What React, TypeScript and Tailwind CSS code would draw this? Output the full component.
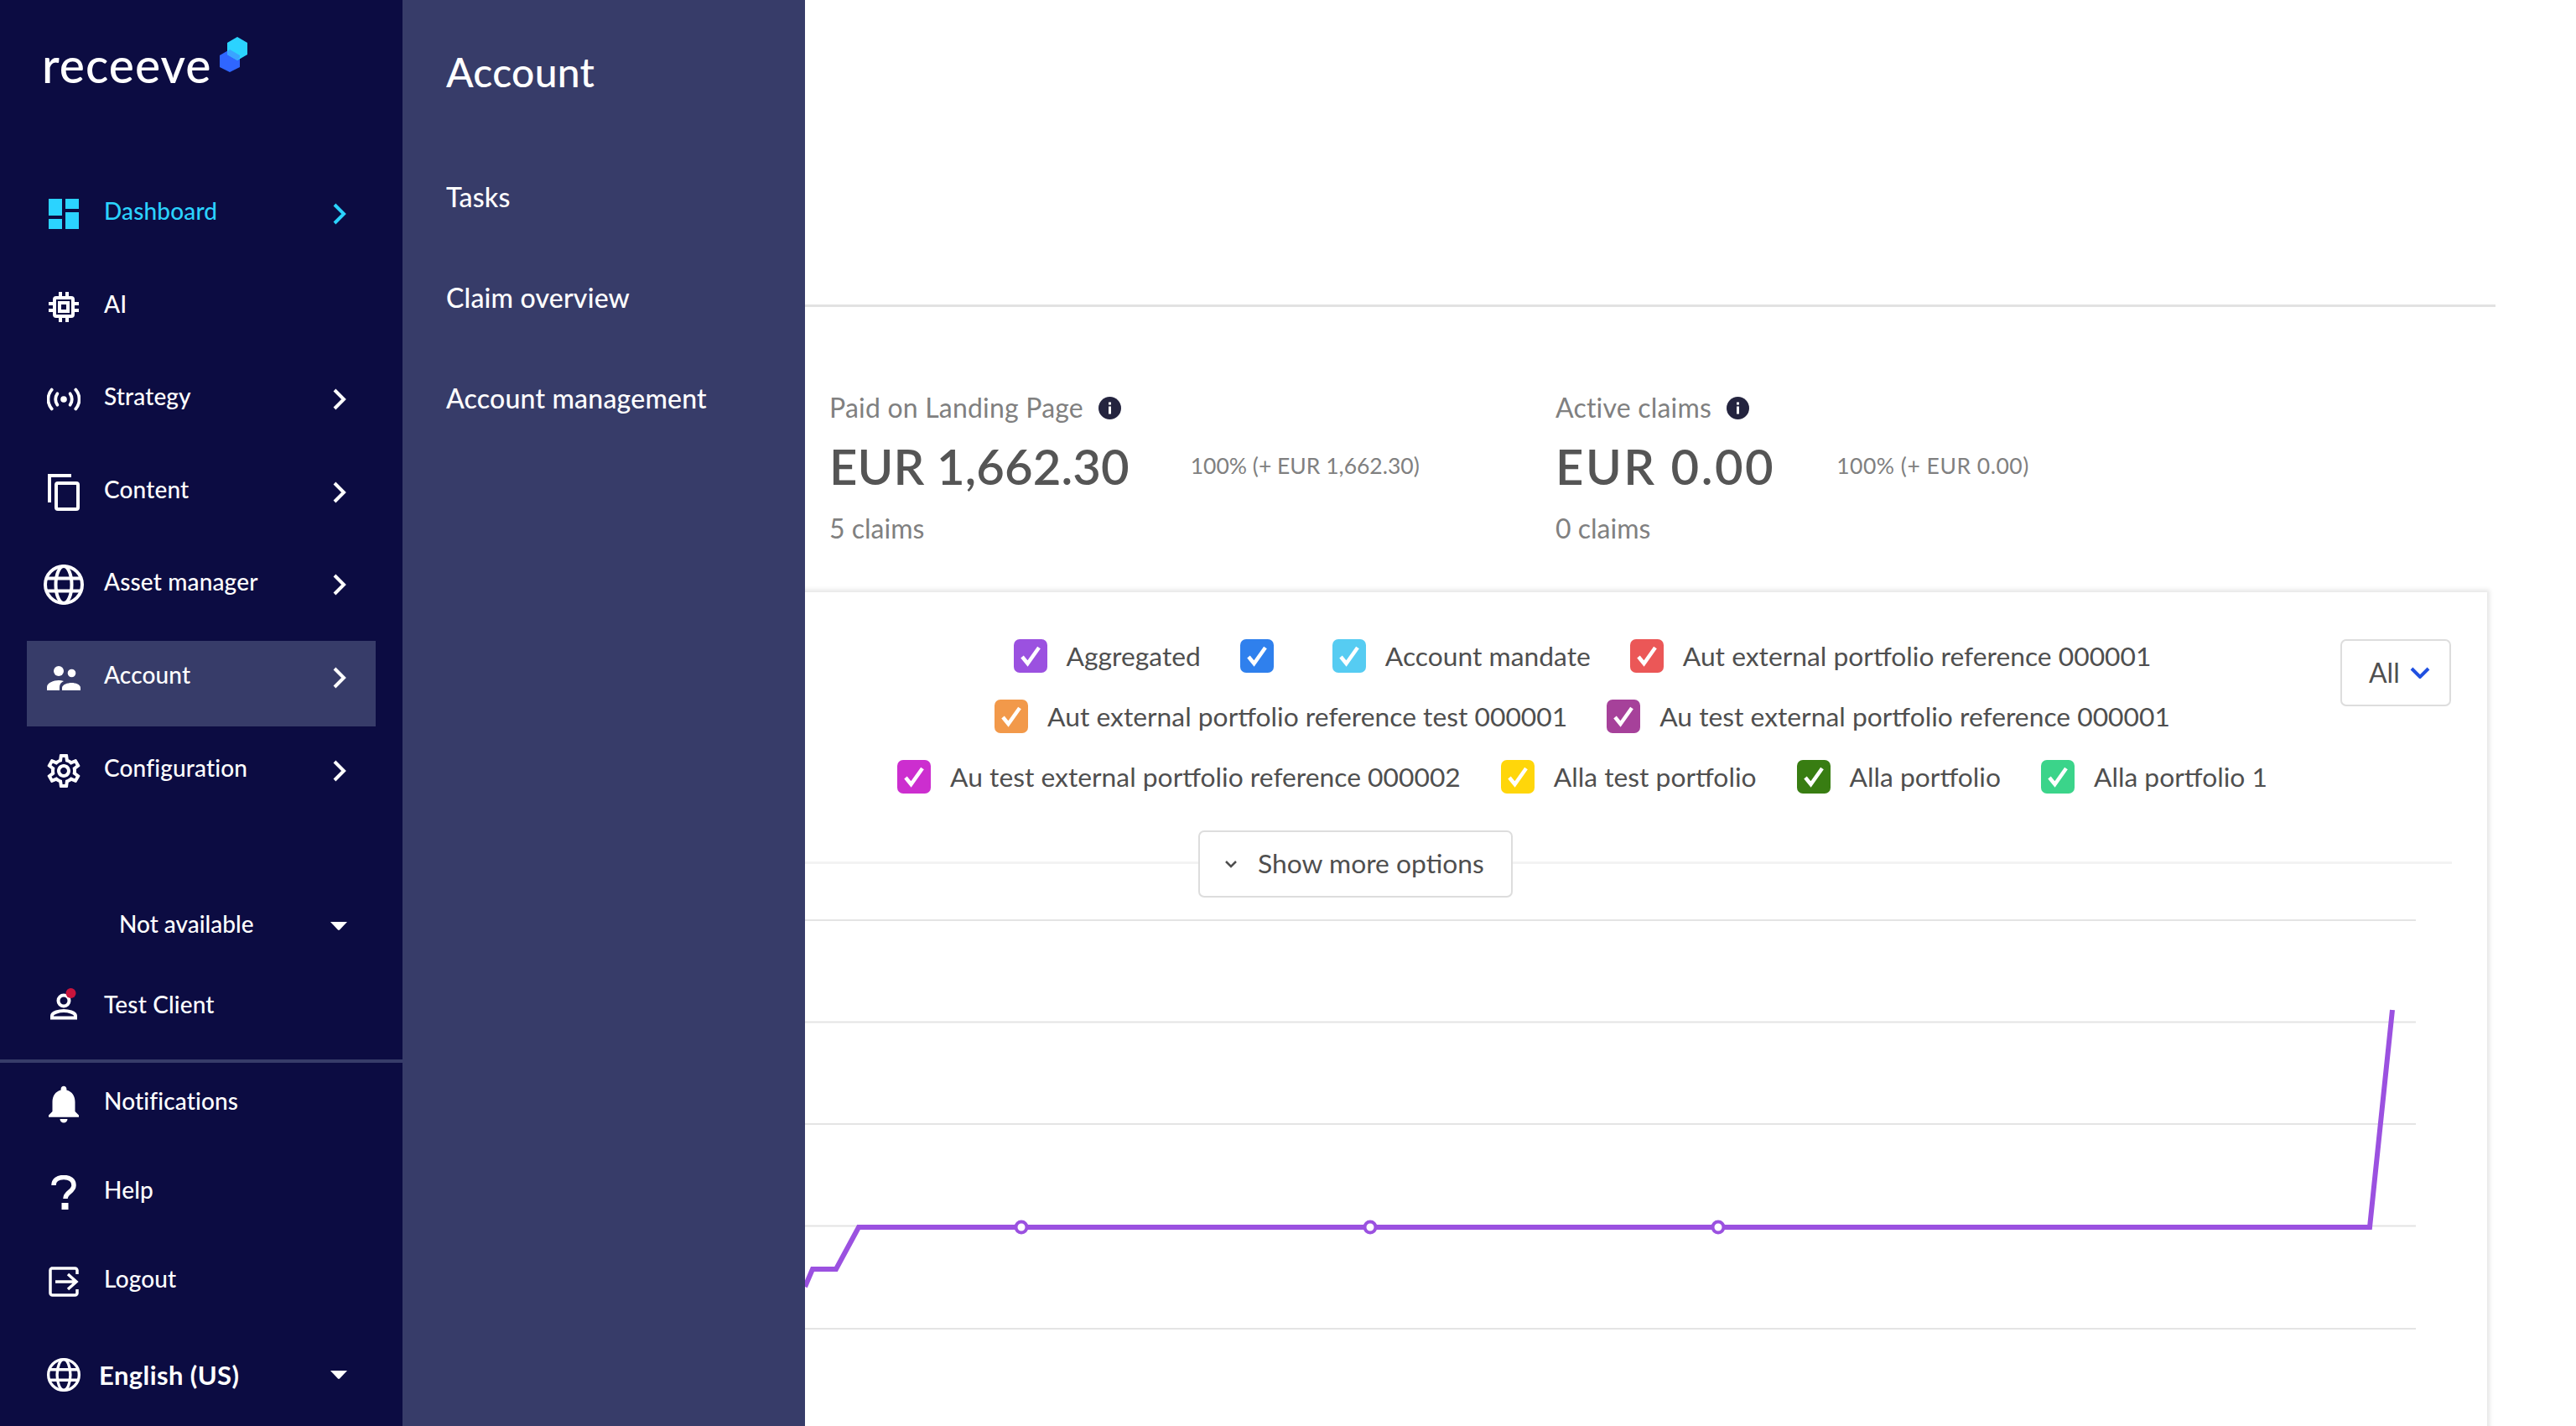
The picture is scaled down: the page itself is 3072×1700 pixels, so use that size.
import type { ReactNode } from "react"
import { MdNotifications, MdOutlineSettings } from "react-icons/md"

const ACTIVE = "#2bd3ff"

function Chevron({ color = "white" }: { color?: string }) {
  return (
    <svg width="16" height="26" viewBox="0 0 16 26" fill="none">
      <path d="M2 2l11 11L2 24" stroke={color} strokeWidth="4" />
    </svg>
  )
}

function Caret() {
  return (
    <svg width="20" height="10" viewBox="0 0 20 10">
      <path d="M0 0h20L11 9.5a1.5 1.5 0 0 1-2 0z" fill="white" />
    </svg>
  )
}

function DashboardIcon() {
  return (
    <svg width="36" height="36" viewBox="0 0 36 36" fill={ACTIVE}>
      <rect x="0" y="0" width="16" height="20" />
      <rect x="20" y="0" width="16" height="12" />
      <rect x="0" y="24" width="16" height="12" />
      <rect x="20" y="16" width="16" height="20" />
    </svg>
  )
}

function ChipIcon() {
  return (
    <svg width="36" height="36" viewBox="0 0 36 36" fill="white">
      <path d="M12 0h4v5h4V0h4v5h3a4 4 0 0 1 4 4v3h5v4h-5v4h5v4h-5v3a4 4 0 0 1-4 4h-3v5h-4v-5h-4v5h-4v-5H9a4 4 0 0 1-4-4v-3H0v-4h5v-4H0v-4h5V9a4 4 0 0 1 4-4h3zM9 9v18h18V9z" fillRule="evenodd" />
      <path d="M11 11h14v14H11zM15 15v6h6v-6z" fillRule="evenodd" />
    </svg>
  )
}

function AntennaIcon() {
  return (
    <svg width="40" height="28" viewBox="0 0 42 28" fill="none" stroke="white" strokeWidth="4" strokeLinecap="round">
      <circle cx="21" cy="14" r="4" fill="white" stroke="none" />
      <path d="M13 7c-3 4-3 10 0 14M29 7c3 4 3 10 0 14" />
      <path d="M6 2c-6 7-6 17 0 24M36 2c6 7 6 17 0 24" />
    </svg>
  )
}

function CopyIcon() {
  return (
    <svg width="38" height="44" viewBox="0 0 38 44" fill="none">
      <path d="M28 2H2v32" stroke="white" strokeWidth="4" />
      <rect x="10" y="11" width="26" height="31" rx="2" stroke="white" strokeWidth="4" />
    </svg>
  )
}

function GlobeIcon({ size = 48 }: { size?: number }) {
  return (
    <svg width={size} height={size} viewBox="0 0 48 48" fill="none" stroke="white" strokeWidth="4">
      <circle cx="24" cy="24" r="22" />
      <ellipse cx="24" cy="24" rx="9.500" ry="22" />
      <path d="M3 16.500h42M3 31.500h42" />
    </svg>
  )
}

function PeopleIcon() {
  return (
    <svg width="40" height="30" viewBox="0 0 40 30" fill="white">
      <circle cx="14" cy="7" r="6" />
      <circle cx="29.500" cy="9.500" r="4.800" />
      <path d="M0 30v-4c0-5 8-8 14-8 2 0 4 .3 6 1-3 1.500-5 3.500-5 7v4z" />
      <path d="M18 30v-3c0-4 7-6 11.500-6S40 23 40 27v3z" />
    </svg>
  )
}

function ClientIcon() {
  return (
    <svg width="36" height="38" viewBox="0 0 36 38" fill="none">
      <circle cx="18" cy="15" r="6.500" stroke="white" strokeWidth="4" />
      <path d="M4 35.500v-2.500c0-4 9-6 14-6s14 2 14 6v2.500z" stroke="white" strokeWidth="4" />
      <circle cx="26.500" cy="6" r="6" fill="#c8143c" />
    </svg>
  )
}

function HelpIcon() {
  return (
    <svg width="30" height="42" viewBox="0 0 30 42" fill="none">
      <path d="M3 12C3 6 8 2.500 15 2.500S27 6 27 12c0 8-10 8-10 16" stroke="white" strokeWidth="5.500" />
      <rect x="12.500" y="33" width="8" height="8" fill="white" />
    </svg>
  )
}

function LogoutIcon() {
  return (
    <svg width="36" height="36" viewBox="0 0 36 36" fill="none" stroke="white" strokeWidth="3.500">
      <path d="M34 9V4.500A2.500 2.500 0 0 0 31.500 2h-28A2.500 2.500 0 0 0 2 4.500v27A2.500 2.500 0 0 0 4.500 34h27a2.500 2.500 0 0 0 2.500-2.500V27" />
      <path d="M8 18h25M23 9l10 9-10 9" />
    </svg>
  )
}

function NavItem({ icon, label, active, highlight, arrow = true }: { icon: ReactNode; label: string; active?: boolean; highlight?: boolean; arrow?: boolean }) {
  return (
    <div className={`flex h-[102px] w-[416px] items-start pl-[16px] pr-[35px] ${highlight ? "bg-[#373c69]" : ""}`}>
      <div className="mt-[16px] flex h-[56px] w-[56px] items-center justify-center">{icon}</div>
      <div className={`ml-[20px] mt-[24px] flex-1 text-[28px] font-medium leading-[32px] tracking-[0.15px] ${active ? "text-[#2bd3ff]" : "text-white"}`}>{label}</div>
      {arrow && (
        <div className="mt-[31px]">
          <Chevron color={active ? ACTIVE : "white"} />
        </div>
      )}
    </div>
  )
}

function FooterItem({ icon, label }: { icon: ReactNode; label: string }) {
  return (
    <div className="flex h-[56px] items-center pl-[48px]">
      <div className="flex w-[56px] justify-center">{icon}</div>
      <div className="ml-[20px] pb-[8px] text-[28px] font-medium leading-[32px] tracking-[0.15px] text-white">{label}</div>
    </div>
  )
}

function Sidebar() {
  return (
    <aside className="flex h-[1700px] w-[480px] shrink-0 flex-col bg-[#0c0c42]">
      <div className="flex h-[211px] items-start pl-[50px] pt-[43px]">
        <span className="text-[57px] font-medium leading-[68px] tracking-[1px] text-white">receeve</span>
        <svg className="ml-[10px] mt-[1px]" width="34" height="42" viewBox="0 0 34 42">
          <path d="M0 22l12-7 12 7v14l-12 6-12-6z" fill="#2f66ff" />
          <path d="M9 7l12-7 12 7v14l-12 7-12-7z" fill="#2bd3ff" />
          <path d="M9 17.300l3-2.300 12 7v2.500l-3 3.500-12-7z" fill="#3aa4ff" />
        </svg>
      </div>
      <div className="flex h-[860px] flex-col gap-[8.6px] pl-[32px]">
        <NavItem icon={<DashboardIcon />} label="Dashboard" active />
        <NavItem icon={<ChipIcon />} label="AI" arrow={false} />
        <NavItem icon={<AntennaIcon />} label="Strategy" />
        <NavItem icon={<CopyIcon />} label="Content" />
        <NavItem icon={<GlobeIcon />} label="Asset manager" />
        <NavItem icon={<PeopleIcon />} label="Account" highlight />
        <NavItem icon={<MdOutlineSettings size={48} color="white" />} label="Configuration" />
      </div>
      <div className="flex h-[60px] items-center pl-[142px] pr-[66px] text-[28px] font-medium text-white">
        <span className="flex-1">Not available</span>
        <span className="pt-[6px]">
          <Caret />
        </span>
      </div>
      <div className="flex h-[132px] items-center pl-[48px]">
        <div className="flex w-[56px] justify-center">
          <ClientIcon />
        </div>
        <div className="ml-[20px] text-[28px] font-medium tracking-[0.15px] text-white">Test Client</div>
      </div>
      <div className="h-[4px] bg-[#373c69]" />
      <div className="flex flex-col gap-[50px] pt-[21px]">
        <FooterItem icon={<MdNotifications size={54} color="white" />} label="Notifications" />
        <FooterItem icon={<HelpIcon />} label="Help" />
        <FooterItem icon={<LogoutIcon />} label="Logout" />
      </div>
      <div className="mt-[55px] flex h-[56px] items-center pl-[48px] pr-[66px]">
        <div className="flex w-[56px] justify-center">
          <GlobeIcon size={40} />
        </div>
        <div className="ml-[14px] flex-1 text-[31px] font-bold tracking-[0.4px] text-white">English (US)</div>
        <Caret />
      </div>
    </aside>
  )
}

function AccountPanel() {
  return (
    <div className="h-[1700px] w-[480px] shrink-0 bg-[#373c69] pl-[52px] font-medium text-white">
      <div className="pt-[56px] text-[48px] leading-[60px] tracking-[0.3px]">Account</div>
      <div className="mt-[101px] flex flex-col gap-[84px] text-[32px] leading-[36px] tracking-[0.2px]">
        <div>Tasks</div>
        <div>Claim overview</div>
        <div>Account management</div>
      </div>
    </div>
  )
}

function InfoDot() {
  return (
    <svg width="27" height="27" viewBox="0 0 27 27">
      <circle cx="13.500" cy="13.500" r="13.500" fill="#24243f" />
      <rect x="12" y="11.500" width="3" height="9" fill="white" />
      <rect x="12" y="6.500" width="3" height="3" fill="white" />
    </svg>
  )
}

function Stat({ title, value, delta, claims, wide }: { title: string; value: string; delta: string; claims: string; wide?: boolean }) {
  return (
    <div className="w-[866px] shrink-0">
      <div className="mt-[100px] flex h-[40px] items-center gap-[18px] text-[32px] tracking-[0.2px] text-[#808080]">
        {title}
        <InfoDot />
      </div>
      <div className="mt-[14px] flex h-[70px] items-center">
        <span className={`text-[58px] font-semibold text-[#555555] ${wide ? "tracking-[2.5px]" : "tracking-[0.1px]"}`}>{value}</span>
        <span className={`ml-[73px] pt-[2px] text-[26.500px] text-[#808080] ${wide ? "tracking-[0.5px]" : ""}`}>{delta}</span>
      </div>
      <div className="mt-[20px] h-[40px] text-[32px] leading-[40px] text-[#808080]">{claims}</div>
    </div>
  )
}

function LegendItem({ color, label }: { color: string; label?: string }) {
  return (
    <div className="flex items-center gap-[23px]">
      <span className="flex h-[40px] w-[40px] items-center justify-center rounded-[7px]" style={{ backgroundColor: color }}>
        <svg width="26" height="26" viewBox="0 0 26 26" fill="none">
          <path d="M3 14l6.500 8L23 3" stroke="white" strokeWidth="4.500" />
        </svg>
      </span>
      <span className="text-[31.800px] leading-[40px] text-[#4f4f4f]">{label}</span>
    </div>
  )
}

function Legend() {
  return (
    <div className="flex flex-col gap-[32px] pr-[132px]">
      <div className="flex justify-center gap-[47px]">
        <LegendItem color="#9b51e0" label="Aggregated" />
        <LegendItem color="#2f80ed" />
        <LegendItem color="#56ccf2" label="Account mandate" />
        <LegendItem color="#eb5757" label="Aut external portfolio reference 000001" />
      </div>
      <div className="flex justify-center gap-[47px]">
        <LegendItem color="#f2994a" label="Aut external portfolio reference test 000001" />
        <LegendItem color="#a6419a" label="Au test external portfolio reference 000001" />
      </div>
      <div className="flex justify-center gap-[48px]">
        <LegendItem color="#cc2ecf" label="Au test external portfolio reference 000002" />
        <LegendItem color="#ffd60a" label="Alla test portfolio" />
        <LegendItem color="#387d12" label="Alla portfolio" />
        <LegendItem color="#3bd48a" label="Alla portfolio 1" />
      </div>
    </div>
  )
}

function Chart() {
  const gridY = [1, 122.500, 244, 365.500, 488]
  const dots = [258, 674, 1089]
  return (
    <svg className="ml-[20px] block" width="1921" height="530" viewBox="0 0 1921 530" fill="none">
      {gridY.map((y) => (
        <line key={y} x1="0" x2="1921" y1={y} y2={y} stroke="#e4e4e4" strokeWidth="2" />
      ))}
      <path d="M0 438L9 417H37L64 367H1866L1893 108" stroke="#9b51e0" strokeWidth="6" />
      {dots.map((x) => (
        <circle key={x} cx={x} cy="367" r="6.500" fill="white" stroke="#9b51e0" strokeWidth="4" />
      ))}
    </svg>
  )
}

function MainArea() {
  return (
    <main className="min-w-0 flex-1 overflow-hidden pr-[96px]">
      <div className="h-[366px] border-b-[3px] border-[#e2e2e2]" />
      <div className="flex h-[340px] pl-[29px]">
        <Stat title="Paid on Landing Page" value="EUR 1,662.30" delta="100% (+ EUR 1,662.30)" claims="5 claims" />
        <Stat title="Active claims" value="EUR 0.00" delta="100% (+ EUR 0.00)" claims="0 claims" wide />
      </div>
      <section className="relative -ml-[20px] mr-[10px] h-[1100px] bg-white pt-[56px] shadow-[0_0_5px_3px_rgba(0,0,0,0.1)]">
        <div className="absolute right-[43px] top-[56px] flex h-[80px] w-[132px] items-center gap-[12px] rounded-[7px] border-2 border-[#dddddd] bg-white pl-[32px] text-[32px] text-[#4f4f4f]">
          All
          <svg width="24" height="14" viewBox="0 0 24 14" fill="none">
            <path d="M2 2l10 10L22 2" stroke="#2050e0" strokeWidth="4" />
          </svg>
        </div>
        <Legend />
        <div className="relative mt-[44px] h-[80px]">
          <div className="absolute left-0 right-[42px] top-[37px] h-[3px] bg-[#f3f3f3]" />
          <button className="relative ml-[489px] flex h-[80px] w-[375px] items-center gap-[24px] rounded-[7px] border-2 border-[#dddddd] bg-white pl-[29px] text-[31.800px] text-[#4f4f4f]">
            <svg width="16" height="10" viewBox="0 0 16 10" fill="none">
              <path d="M2 2l6 6 6-6" stroke="#4f4f4f" strokeWidth="2.500" />
            </svg>
            Show more options
          </button>
        </div>
        <div className="mt-[26px]">
          <Chart />
        </div>
      </section>
    </main>
  )
}

export default function App() {
  return (
    <div className="flex h-[1700px] w-[3072px] overflow-hidden bg-white font-['Lato',sans-serif]">
      <Sidebar />
      <AccountPanel />
      <MainArea />
    </div>
  )
}
